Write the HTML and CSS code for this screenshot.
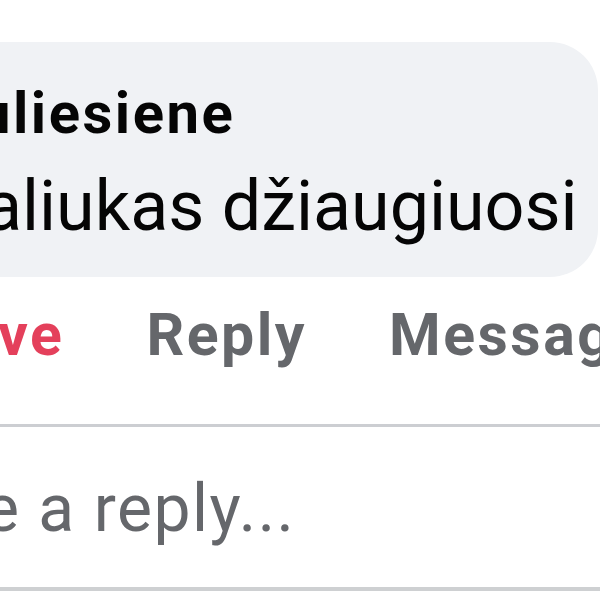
FILE: index.html
```html
<!DOCTYPE html>
<html lang="lt">
<head>
<meta charset="utf-8">
<title>Comment</title>
<link rel="stylesheet" href="styles.css">
</head>
<body>
<div class="page">
  <div class="bubble">
    <div class="name">uliesiene</div>
    <div class="text">aliukas džiaugiuosi</div>
  </div>
  <div class="actions">
    <span class="action love">ve</span>
    <span class="action reply">Reply</span>
    <span class="action message">Message</span>
  </div>
  <div class="divider"></div>
  <div class="composer">
    <span class="placeholder">e a reply...</span>
  </div>
  <div class="bottom-line"></div>
</div>
</body>
</html>
```
FILE: styles.css
```css
html, body {
  margin: 0;
  padding: 0;
  background: #ffffff;
}
.page {
  width: 600px;
  height: 600px;
  overflow: hidden;
  font-family: Roboto, "Liberation Sans", sans-serif;
  position: relative;
}
.bubble {
  margin-top: 42px;
  margin-left: -60px;
  width: 658px;
  box-sizing: border-box;
  background: #f0f2f5;
  border-radius: 48px;
  padding: 36px 0 30px 60px;
  white-space: nowrap;
}
.name {
  font-size: 58px;
  font-weight: 700;
  line-height: 70px;
  letter-spacing: 2.5px;
  color: #050505;
  margin-left: -22px;
}
.text {
  font-size: 70px;
  font-weight: 400;
  line-height: 82px;
  color: #050505;
  margin-top: 17px;
  margin-left: -16px;
}
.actions {
  display: flex;
  margin-top: 23px;
  white-space: nowrap;
  font-size: 59px;
  font-weight: 700;
  line-height: 70px;
  letter-spacing: 2.5px;
  color: #65676b;
}
.love {
  color: #e4405b;
  margin-left: -2px;
}
.reply {
  margin-left: 82px;
}
.message {
  margin-left: 82px;
}
.divider {
  margin-top: 54px;
  height: 3px;
  background: #ccced2;
}
.composer {
  margin-top: 42px;
  height: 80px;
  white-space: nowrap;
  font-size: 66px;
  line-height: 80px;
  letter-spacing: 1.5px;
  color: #65676b;
}
.placeholder {
  display: inline-block;
  margin-left: -16px;
}
.bottom-line {
  margin-top: 38px;
  height: 4px;
  background: #ced0d2;
}
```
